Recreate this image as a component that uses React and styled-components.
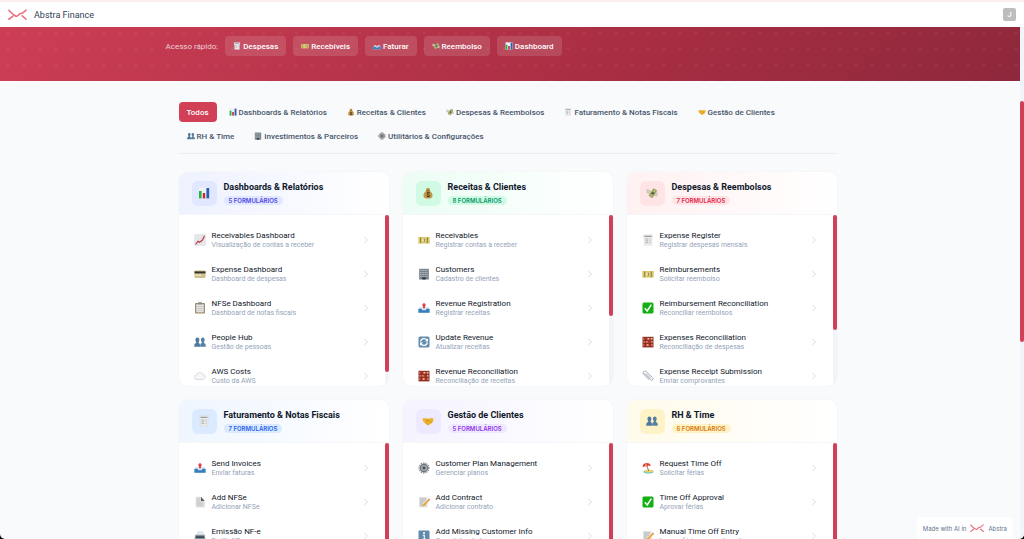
import React, { useState } from 'react';
import styled, { createGlobalStyle } from 'styled-components';

const GlobalStyle = createGlobalStyle`
  * {
    box-sizing: border-box;
  }
  body {
    margin: 0;
    background: #000;
    font-family: Roboto, Inter, sans-serif;
    color: #1e293b;
  }
`;

const Page = styled.div`
  height: 100vh;
  display: flex;
  flex-direction: column;
  overflow: hidden;
  background: #f8fafc;
  border-top: 2px solid #fbeeee;
  border-radius: 0 0 5px 5px;
`;

const TopBar = styled.header`
  display: flex;
  align-items: center;
  gap: 7px;
  flex: none;
  height: 25px;
  padding: 0 8px;
  background: #fff;
`;

const AppName = styled.span`
  flex: 1;
  font-size: 9px;
  color: #334155;
`;

const Avatar = styled.button`
  width: 13px;
  height: 13px;
  padding: 0;
  border: none;
  border-radius: 2px;
  background: #bdbdbd;
  color: #fff;
  font-family: inherit;
  font-size: 8px;
  font-weight: 500;
  line-height: 13px;
  cursor: pointer;
`;

const Body = styled.div`
  flex: 1;
  min-height: 0;
  display: flex;
`;

const Content = styled.div`
  flex: 1;
  min-width: 0;
  overflow: hidden;
`;

const Track = styled.div`
  flex: none;
  width: 4px;
  background: #f1f5f9;
`;

const Thumb = styled.div`
  margin-top: ${(props) => props.$top || 0}px;
  height: ${(props) => props.$size};
  background: #d14056;
  border-radius: 2px;
`;

const Hero = styled.section`
  padding: 9px 3px 25px 0;
  background-image: radial-gradient(circle at 8px 6px, rgba(255, 255, 255, 0.05) 1px, transparent 2px),
    linear-gradient(135deg, #cd3e55 0%, #a92e43 60%, #8e283c 100%);
  background-size: 16px 16px, 100% 100%;
`;

const QuickLinks = styled.nav`
  display: flex;
  align-items: center;
  gap: 7px;
  max-width: 686px;
  margin: 0 auto;
`;

const QuickLabel = styled.span`
  font-size: 8px;
  color: rgba(255, 255, 255, 0.75);
`;

const QuickLink = styled.a`
  display: flex;
  align-items: center;
  gap: 2px;
  height: 20px;
  padding: 0 8px;
  border-radius: 4px;
  background: rgba(255, 255, 255, 0.13);
  color: #fff;
  font-size: 8px;
  font-weight: 500;
  text-decoration: none;
`;

const Main = styled.main`
  padding: 21px 5px 0 0;
`;

const Inner = styled.div`
  max-width: 658px;
  margin: 0 auto;
`;

const Tabs = styled.div`
  display: flex;
  flex-wrap: wrap;
  gap: 4px;
  padding-bottom: 7px;
  margin-bottom: 18px;
  border-bottom: 1px solid #e9eef4;
`;

const Tab = styled.button`
  display: flex;
  align-items: center;
  gap: 2px;
  height: 20px;
  padding: 0 8px;
  border: none;
  border-radius: 4px;
  background: ${(props) => (props.$active ? '#d14056' : 'transparent')};
  color: ${(props) => (props.$active ? '#fff' : '#475569')};
  font-family: inherit;
  font-size: 8px;
  font-weight: 500;
  cursor: pointer;
`;

const Grid = styled.div`
  display: grid;
  grid-template-columns: repeat(3, 1fr);
  gap: 14px;
`;

const Card = styled.section`
  overflow: hidden;
  background: #fff;
  border-radius: 9px;
  box-shadow: 0 0 2px rgba(15, 23, 42, 0.06);
`;

const CardHeader = styled.div`
  display: flex;
  align-items: center;
  gap: 7px;
  height: 43px;
  padding: 0 13px;
  border-bottom: 1px solid #f4f6fa;
  background: linear-gradient(90deg, ${(props) => props.$from}, #fff);
`;

const CardIcon = styled.span`
  display: grid;
  place-items: center;
  width: 25px;
  height: 25px;
  border-radius: 6px;
  background: ${(props) => props.$bg};
`;

const CardTitle = styled.h2`
  margin: 0 0 3px;
  font-size: 9px;
  line-height: 12px;
  font-weight: 700;
  color: #0f172a;
`;

const Count = styled.span`
  display: block;
  width: max-content;
  padding: 0 5px;
  border-radius: 5px;
  background: ${(props) => props.$bg};
  color: ${(props) => props.$color};
  font-family: Inter, sans-serif;
  font-size: 6px;
  line-height: 9px;
  font-weight: 600;
  text-transform: uppercase;
`;

const CardBody = styled.div`
  display: flex;
  height: 171px;
`;

const List = styled.ul`
  flex: 1;
  min-width: 0;
  margin: 0;
  padding: 8px 7px;
  list-style: none;
  overflow: hidden;
`;

const Item = styled.a`
  display: flex;
  align-items: center;
  gap: 6px;
  height: 34px;
  padding: 0 9px 0 8px;
  color: inherit;
  text-decoration: none;
`;

const ItemText = styled.span`
  flex: 1;
  min-width: 0;
  white-space: nowrap;
`;

const ItemName = styled.span`
  display: block;
  font-size: 8px;
  line-height: 10px;
  color: #0f172a;
`;

const ItemInfo = styled.span`
  display: block;
  font-size: 7px;
  line-height: 9px;
  color: #94a3b8;
`;

const MadeWith = styled.a`
  position: fixed;
  right: 11px;
  bottom: 0;
  display: flex;
  align-items: center;
  gap: 4px;
  height: 22px;
  padding: 0 6px;
  border-radius: 4px 4px 0 0;
  background: #fff;
  color: #64748b;
  font-family: Inter, sans-serif;
  font-size: 6px;
  text-decoration: none;
`;

const IconSvg = styled.svg`
  flex: none;
  width: ${(props) => props.$size}px;
  height: ${(props) => props.$size}px;
`;

const Logo = ({ width }) => (
  <svg width={width} viewBox="0 0 20 12" fill="none" strokeLinecap="round" strokeLinejoin="round" aria-hidden="true">
    <path d="M1 1.5 5.500 5.800 8.500 7.600 10 7.300 13 4.700 15 4.500 19 1.200M1 10.800 5.200 7.600M19 10.800 15 7.200" stroke="#ec7484" strokeWidth="1.700" />
  </svg>
);

const Chevron = () => (
  <svg width="6" height="8" viewBox="0 0 6 8" fill="none" stroke="#cbd5e1" strokeWidth="0.8" aria-hidden="true">
    <path d="M1.5 1 4.5 4 1.5 7" />
  </svg>
);

const shapes = {
  bars: (
    <>
      <rect x="0.8" y="0.5" width="10.6" height="11" fill="#eef2f7" />
      <rect x="1" y="4" width="2.6" height="7.4" fill="#22b14c" />
      <rect x="4.8" y="6" width="2.4" height="5.4" fill="#c8262c" />
      <rect x="8.4" y="1" width="2.8" height="10.4" fill="#2b5fb4" />
    </>
  ),
  chart: (
    <>
      <rect x="0.8" y="0.8" width="10.4" height="10.4" fill="#e8ebee" stroke="#c9cfd6" strokeWidth="0.5" />
      <path d="M1 4.3h10M1 7.7h10M4.3 1v10M7.7 1v10" stroke="#cfd5dc" strokeWidth="0.4" />
      <path d="M1.5 10.5 4 7.3 5.5 8.2 8.5 6 10.5 1.8" fill="none" stroke="#c33a48" strokeWidth="1.2" />
    </>
  ),
  credit: (
    <>
      <rect x="0.5" y="2.5" width="11" height="7.4" rx="0.8" fill="#cfc08a" />
      <rect x="0.5" y="3.4" width="11" height="2" fill="#34332d" />
      <rect x="1.5" y="6.5" width="6" height="1.2" fill="#f1ead0" />
    </>
  ),
  clipboard: (
    <>
      <rect x="1" y="1" width="10" height="10.6" rx="0.6" fill="#a3906f" />
      <rect x="2.3" y="2.3" width="7.4" height="8" fill="#e3e3e1" />
      <rect x="4" y="0.3" width="4" height="2" fill="#85898d" />
      <path d="M3.3 4.5h5.4M3.3 6.3h5.4M3.3 8.1h5.4" stroke="#aaacad" strokeWidth="0.5" />
    </>
  ),
  people: (
    <>
      <path d="M0.3 10.8V9q0-1.6 1.8-2 .4-.4 0-1.1Q1.3 4.800 1.400 3.500 1.600 1.500 3.400 1.500T5.400 3.500Q5.500 4.800 4.700 5.900q-.4.700 0 1.100Q6 7.400 6 9v1.800Z" fill="#4f789f" />
      <path d="M6.200 10.800V9q0-1.600 1.500-2 .4-.4 0-1.100Q6.800 4.800 6.900 3.500 7 1.500 8.800 1.500t1.900 2q.1 1.300-.7 2.400-.4.700 0 1.100 1.700.4 1.700 2v1.800Z" fill="#587fa4" />
    </>
  ),
  cloud: <path d="M3 9.500a2.300 2.300 0 0 1-.3-4.600A3.300 3.300 0 0 1 9 4.600a2.500 2.500 0 0 1 .3 4.900Z" fill="#f4f6f8" stroke="#c3cad2" strokeWidth="0.6" />,
  bag: (
    <>
      <path d="M4 1 5.200 1.600 6 .6l.8 1L8 1 7.400 3.300Q10.800 6 10.500 9.200 10.300 11.500 6 11.500T1.500 9.200Q1.200 6 4.600 3.300Z" fill="#c2994a" />
      <path d="M4.300 3.300h3.400" stroke="#6d4b1b" strokeWidth="0.8" />
      <text x="6" y="10" textAnchor="middle" fontSize="6.500" fontWeight="700" fill="#3f2d12">$</text>
    </>
  ),
  note: (
    <>
      <rect x="0.3" y="3" width="11.400" height="6.600" fill="#dcc96c" />
      <circle cx="6" cy="6.300" r="2.300" fill="#f3e48c" />
      <path d="M2.700 3.500v5.600M9.300 3.500v5.600" stroke="#77714a" strokeWidth="0.9" />
      <path d="M5.500 5h1.200v2.600H5.500" fill="none" stroke="#5f5a3c" strokeWidth="0.7" />
    </>
  ),
  wings: (
    <>
      <path d="M1 2.500 5 4 4 7 .8 5.500ZM7.500 5.200 11.600 6l-1 3.200-3.400-.8Z" fill="#cfd3c4" stroke="#a3a894" strokeWidth="0.400" />
      <path d="M2.600 8.800 7.500 1.200l3.700 2.300L6.200 11.300Z" fill="#969f5c" />
      <path d="M4.800 9.800 9.200 2.600" stroke="#ddd58a" strokeWidth="1" />
      <circle cx="6.800" cy="6.200" r="1.200" fill="#4f5a37" />
    </>
  ),
  building: (
    <>
      <rect x="1.200" y="0.800" width="9.600" height="10.700" fill="#76818a" />
      <path d="M2 2.500h8M2 4.500h8M2 6.500h8M2 8.500h8" stroke="#b9c4cc" strokeWidth="0.9" strokeDasharray="1.100 0.500" />
      <rect x="4.300" y="9.200" width="3.400" height="2.300" fill="#333b43" />
    </>
  ),
  tray: (
    <>
      <path d="M1.800 5h8.400l1.400 3v2.700H.4V8Z" fill="#dbe4ed" />
      <path d="M.4 6.800H3.500L4.500 8.300h3L8.500 6.800h3.100v3.900H.4Z" fill="#357fc0" />
      <path d="M6 .8 8.400 3.600H7V6.300H5V3.600H3.600Z" fill="#e23d45" />
    </>
  ),
  sync: (
    <>
      <rect x="0.500" y="0.500" width="11" height="11" rx="1.600" fill="#648cb0" />
      <path d="M2.600 5.600A3.500 3.500 0 0 1 8.800 3.900M9.400 6.400A3.500 3.500 0 0 1 3.200 8.100" fill="none" stroke="#fff" strokeWidth="1.300" />
      <path d="M10 2.300V5.400H7ZM2 9.700V6.600H5Z" fill="#fff" />
    </>
  ),
  abacus: (
    <>
      <rect x="0.500" y="0.800" width="11" height="10.600" fill="#8e3424" />
      <path d="M1.500 2.800h9M1.500 5.900h9M1.500 9h9" stroke="#f0cdb8" strokeWidth="1.400" />
      <path d="M2 2.800h3.500M7.500 2.800h1.200M2.500 5.900h1.200M5.500 5.900h3.500M2 9h2.500M6.500 9h3" stroke="#c93226" strokeWidth="2.200" />
      <path d="M3.800 1.300v9.600M8 1.300v9.600" stroke="#5d2018" strokeWidth="0.500" />
    </>
  ),
  receipt: (
    <>
      <path d="M1.500.8h9v3H9.800v7.700l-1.300-.6-1.200.6-1.300-.6-1.200.6-1.200-.6-1.300.6V3.800h-.8Z" fill="#eceded" stroke="#c7c9cb" strokeWidth="0.300" />
      <path d="M2.500 2.300h7" stroke="#858a8e" strokeWidth="1" />
      <path d="M3.500 5h2.700M7.500 5h1M3.500 6.800h2.700M7.500 6.800h1M3.500 8.600h2.700M7.500 8.600h1" stroke="#92979b" strokeWidth="0.700" />
    </>
  ),
  check: (
    <>
      <rect x="0.500" y="0.500" width="11" height="11" rx="1.500" fill="#12b012" />
      <path d="M2.800 6.300 5.200 9 9.300 2.700" fill="none" stroke="#fff" strokeWidth="1.500" />
    </>
  ),
  clip: <path d="M2 3.300 8.700 9.800a1.400 1.400 0 0 0 2-2L4.300 1.600a1.900 1.900 0 0 0-2.700 2.700L7 9.700M3.800 3.300 9 8.400" fill="none" stroke="#919ca8" strokeWidth="0.800" />,
  hands: (
    <>
      <path d="M.3 3.800 2.200 2.900 5.500 3.700 9.700 2.900 11.700 3.800 10.700 7.300 7.200 10Q6.400 10.700 5.300 9.900L1.500 7Z" fill="#eeb52c" />
      <path d="M5.700 3.800 4.200 5.700Q5 6.800 6.800 5.500L9.800 8M4 8.800 5 7.700M5.400 9.800 6.400 8.700" fill="none" stroke="#b77c17" strokeWidth="0.600" />
    </>
  ),
  gear: (
    <>
      <circle cx="6" cy="6" r="4.900" fill="none" stroke="#6d757b" strokeWidth="1.100" strokeDasharray="1.200 0.720" />
      <circle cx="6" cy="6" r="3.600" fill="#a4aaaf" stroke="#6d757b" strokeWidth="1.100" />
      <circle cx="6" cy="6" r="1.400" fill="#454c52" />
    </>
  ),
  page: (
    <>
      <path d="M1.700.700H7L10.700 5v6.400h-9Z" fill="#dcdddd" />
      <path d="M7 .700V5h3.700Z" fill="#57595b" />
      <path d="M2.800 3h3M2.800 5h3M2.800 7h6M2.800 9h6" stroke="#a5a7a9" strokeWidth="0.500" />
    </>
  ),
  printer: (
    <>
      <path d="M3.300 1h6l.8 4H2.500Z" fill="#e6e9eb" />
      <path d="M1.300 4.700h9.400l1 5.800H.3Z" fill="#8795a1" />
      <path d="M2 6.300h8v1.700H2Z" fill="#3b464f" />
      <path d="M2.500 9.300h7" stroke="#5aa5d0" strokeWidth="1" />
    </>
  ),
  memo: (
    <>
      <rect x="1" y="1" width="8.500" height="10.400" fill="#e2e2e0" />
      <path d="M2 3h6M2 5h5M2 7h3M2 9h6" stroke="#92979b" strokeWidth="0.600" />
      <path d="M4.800 8.800 10.200 3.200 11.500 4.500 6.200 9.900 4.300 10.400Z" fill="#e8a831" />
      <path d="M10.200 3.200 11 2.400 12 3.700 11.500 4.500Z" fill="#d65b63" />
    </>
  ),
  info: (
    <>
      <rect x="0.500" y="0.500" width="11" height="11" rx="1" fill="#608bae" />
      <circle cx="6" cy="3" r="1" fill="#fff" />
      <path d="M4.800 5.300H6.300V9.300M4.500 9.400h3.200" fill="none" stroke="#fff" strokeWidth="1.100" />
    </>
  ),
  beach: (
    <>
      <ellipse cx="6.500" cy="9.800" rx="5" ry="1.800" fill="#58c5cf" />
      <ellipse cx="6.800" cy="9" rx="4.200" ry="1.500" fill="#f1cf69" />
      <path d="M4.800 3.500 6.700 9" stroke="#8a6337" strokeWidth="0.800" />
      <path d="M.7 5.200Q.6 1.300 4.400.900 8.200.700 8.900 4L6.500 3.600 4.600 4.700 3 4.200Z" fill="#dc3e32" />
      <path d="M3 4.200 4.300.900 4.600 4.700Z" fill="#f6d4bd" />
    </>
  ),
};

const Icon = ({ name, size }) => (
  <IconSvg $size={size} viewBox="0 0 12 12" aria-hidden="true">
    {shapes[name]}
  </IconSvg>
);

const quickLinks = [
  ['receipt', 'Despesas'],
  ['note', 'Recebíveis'],
  ['tray', 'Faturar'],
  ['wings', 'Reembolso'],
  ['bars', 'Dashboard'],
];

const tabs = [
  ['', 'Todos'],
  ['bars', 'Dashboards & Relatórios'],
  ['bag', 'Receitas & Clientes'],
  ['wings', 'Despesas & Reembolsos'],
  ['receipt', 'Faturamento & Notas Fiscais'],
  ['hands', 'Gestão de Clientes'],
  ['people', 'RH & Time'],
  ['building', 'Investimentos & Parceiros'],
  ['gear', 'Utilitários & Configurações'],
];

const cards = [
  {
    title: 'Dashboards & Relatórios', icon: 'bars', count: 5, thumb: '92%',
    from: '#eef2ff', bg: '#e0e7ff', color: '#4f46e5',
    items: [
      ['chart', 'Receivables Dashboard', 'Visualização de contas a receber'],
      ['credit', 'Expense Dashboard', 'Dashboard de despesas'],
      ['clipboard', 'NFSe Dashboard', 'Dashboard de notas fiscais'],
      ['people', 'People Hub', 'Gestão de pessoas'],
      ['cloud', 'AWS Costs', 'Custo da AWS'],
    ],
  },
  {
    title: 'Receitas & Clientes', icon: 'bag', count: 8, thumb: '59%',
    from: '#ecfdf5', bg: '#d1fae5', color: '#059669',
    items: [
      ['note', 'Receivables', 'Registrar contas a receber'],
      ['building', 'Customers', 'Cadastro de clientes'],
      ['tray', 'Revenue Registration', 'Registrar receitas'],
      ['sync', 'Update Revenue', 'Atualizar receitas'],
      ['abacus', 'Revenue Reconciliation', 'Reconciliação de receitas'],
    ],
  },
  {
    title: 'Despesas & Reembolsos', icon: 'wings', count: 7, thumb: '67%',
    from: '#fff1f2', bg: '#ffe4e6', color: '#e11d48',
    items: [
      ['receipt', 'Expense Register', 'Registrar despesas mensais'],
      ['note', 'Reimbursements', 'Solicitar reembolso'],
      ['check', 'Reimbursement Reconciliation', 'Reconciliar reembolsos'],
      ['abacus', 'Expenses Reconciliation', 'Reconciliação de despesas'],
      ['clip', 'Expense Receipt Submission', 'Enviar comprovantes'],
    ],
  },
  {
    title: 'Faturamento & Notas Fiscais', icon: 'receipt', count: 7, thumb: '67%',
    from: '#eff6ff', bg: '#dbeafe', color: '#2563eb',
    items: [
      ['tray', 'Send Invoices', 'Enviar faturas'],
      ['page', 'Add NFSe', 'Adicionar NFSe'],
      ['printer', 'Emissão NF-e', 'Emitir NF-e'],
    ],
  },
  {
    title: 'Gestão de Clientes', icon: 'hands', count: 5, thumb: '92%',
    from: '#f5f3ff', bg: '#ede9fe', color: '#9333ea',
    items: [
      ['gear', 'Customer Plan Management', 'Gerenciar planos'],
      ['memo', 'Add Contract', 'Adicionar contrato'],
      ['info', 'Add Missing Customer Info', 'Completar dados'],
    ],
  },
  {
    title: 'RH & Time', icon: 'people', count: 6, thumb: '78%',
    from: '#fffbeb', bg: '#fef3c7', color: '#d97706',
    items: [
      ['beach', 'Request Time Off', 'Solicitar férias'],
      ['check', 'Time Off Approval', 'Aprovar férias'],
      ['memo', 'Manual Time Off Entry', 'Lançar férias manualmente'],
    ],
  },
];

const App = () => {
  const [active, setActive] = useState('Todos');
  const visible = active === 'Todos' ? cards : cards.filter((card) => card.title === active);

  return (
    <>
      <GlobalStyle />
      <Page>
        <TopBar>
          <Logo width={19} />
          <AppName>Abstra Finance</AppName>
          <Avatar>J</Avatar>
        </TopBar>
        <Body>
          <Content>
            <Hero>
              <QuickLinks>
                <QuickLabel>Acesso rápido:</QuickLabel>
                {quickLinks.map(([icon, label]) => (
                  <QuickLink href="#" key={label}>
                    <Icon name={icon} size={8} />
                    {label}
                  </QuickLink>
                ))}
              </QuickLinks>
            </Hero>
            <Main>
              <Inner>
                <Tabs>
                  {tabs.map(([icon, label]) => (
                    <Tab key={label} $active={active === label} onClick={() => setActive(label)}>
                      {icon && <Icon name={icon} size={8} />}
                      {label}
                    </Tab>
                  ))}
                </Tabs>
                <Grid>
                  {visible.map((card) => (
                    <Card key={card.title}>
                      <CardHeader $from={card.from}>
                        <CardIcon $bg={card.bg}>
                          <Icon name={card.icon} size={12} />
                        </CardIcon>
                        <div>
                          <CardTitle>{card.title}</CardTitle>
                          <Count $bg={card.bg} $color={card.color}>{card.count} formulários</Count>
                        </div>
                      </CardHeader>
                      <CardBody>
                        <List>
                          {card.items.map(([icon, name, info]) => (
                            <li key={name}>
                              <Item href="#">
                                <Icon name={icon} size={12} />
                                <ItemText>
                                  <ItemName>{name}</ItemName>
                                  <ItemInfo>{info}</ItemInfo>
                                </ItemText>
                                <Chevron />
                              </Item>
                            </li>
                          ))}
                        </List>
                        <Track>
                          <Thumb $size={card.thumb} />
                        </Track>
                      </CardBody>
                    </Card>
                  ))}
                </Grid>
              </Inner>
            </Main>
          </Content>
          <Track>
            <Thumb $top={74} $size="47%" />
          </Track>
        </Body>
        <MadeWith href="#">
          Made with AI in
          <Logo width={14} />
          Abstra
        </MadeWith>
      </Page>
    </>
  );
};

export default App;
